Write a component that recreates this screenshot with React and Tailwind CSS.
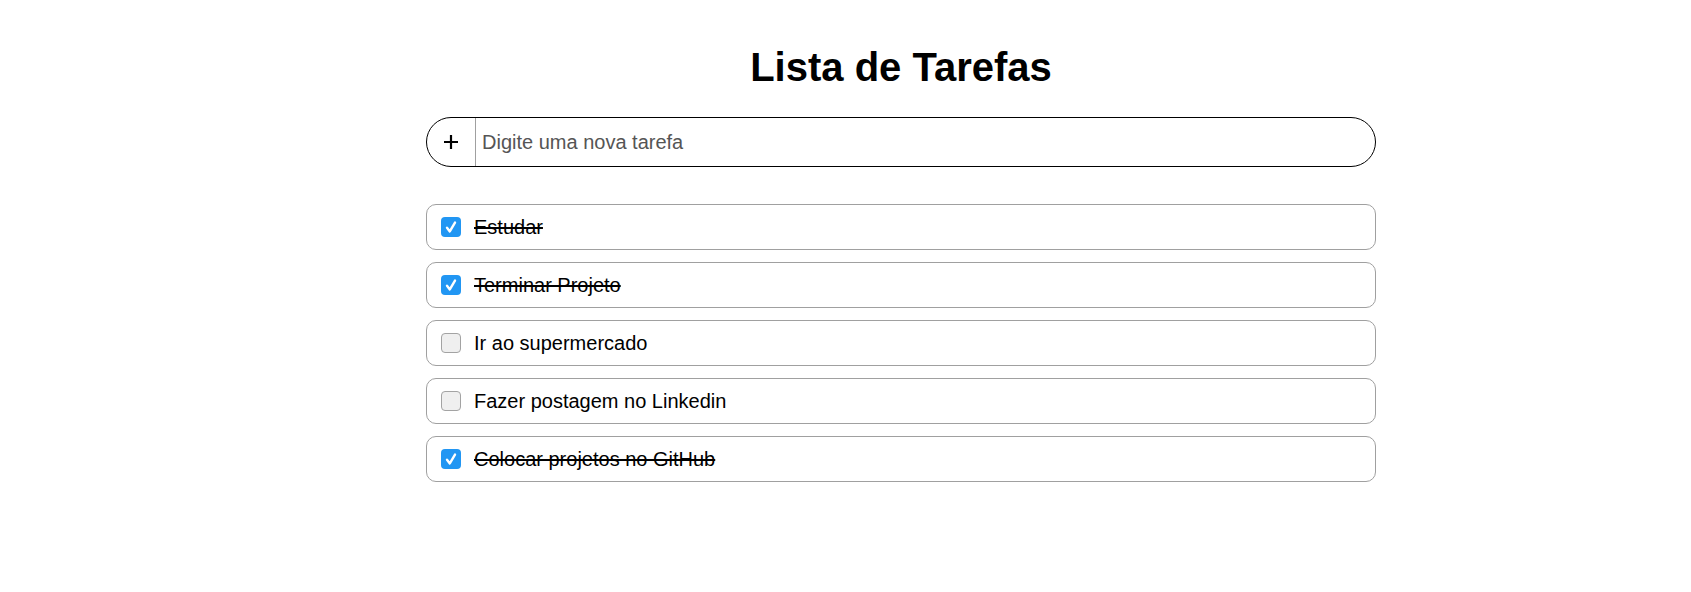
import { useState } from "react";

const initialTasks = [
  { id: 1, text: "Estudar", done: true },
  { id: 2, text: "Terminar Projeto", done: true },
  { id: 3, text: "Ir ao supermercado", done: false },
  { id: 4, text: "Fazer postagem no Linkedin", done: false },
  { id: 5, text: "Colocar projetos no GitHub", done: true },
];

function Checkbox({ checked, onChange }) {
  return (
    <button
      type="button"
      onClick={onChange}
      className={
        checked
          ? "w-5 h-5 shrink-0 rounded-[4px] bg-[#2196f3] flex items-center justify-center"
          : "w-5 h-5 shrink-0 rounded-[4px] bg-[#efefef] border border-[#a3a3a3]"
      }
    >
      {checked && (
        <svg width="16" height="16" viewBox="0 0 16 16" fill="none">
          <path
            d="M4 8.8 L6.8 12.4 L12 3.6"
            stroke="white"
            strokeWidth="2.4"
            strokeLinecap="round"
            strokeLinejoin="round"
          />
        </svg>
      )}
    </button>
  );
}

export default function App() {
  const [tasks, setTasks] = useState(initialTasks);
  const [newTask, setNewTask] = useState("");

  const addTask = () => {
    if (!newTask.trim()) return;
    setTasks([...tasks, { id: Date.now(), text: newTask, done: false }]);
    setNewTask("");
  };

  const toggle = (id) =>
    setTasks(tasks.map((t) => (t.id === id ? { ...t, done: !t.done } : t)));

  return (
    <div className="min-h-screen bg-white font-['Liberation_Sans',Arial,sans-serif] text-black">
      <div className="w-[950px] ml-[426px] pt-[44px] flex flex-col">
        <h1 className="text-[40px] leading-[46px] font-bold text-center">
          Lista de Tarefas
        </h1>

        <div className="mt-[27px] h-[50px] flex items-stretch border border-black rounded-full overflow-hidden">
          <button
            type="button"
            onClick={addTask}
            className="w-[49px] shrink-0 flex items-center justify-center border-r border-[#a0a0a0]"
          >
            <svg width="16" height="16" viewBox="0 0 16 16">
              <path d="M8 1 V15 M1 8 H15" stroke="black" strokeWidth="2.2" />
            </svg>
          </button>
          <input
            type="text"
            value={newTask}
            onChange={(e) => setNewTask(e.target.value)}
            onKeyDown={(e) => e.key === "Enter" && addTask()}
            placeholder="Digite uma nova tarefa"
            className="flex-1 pl-[6px] text-[20px] outline-none placeholder:text-[#555]"
          />
        </div>

        <ul className="mt-[37px] flex flex-col gap-[12px]">
          {tasks.map((task) => (
            <li
              key={task.id}
              className="h-[46px] flex items-center gap-[13px] pl-[14px] border border-[#a0a0a0] rounded-[10px]"
            >
              <Checkbox checked={task.done} onChange={() => toggle(task.id)} />
              <span
                className={
                  task.done ? "text-[20px] line-through" : "text-[20px]"
                }
              >
                {task.text}
              </span>
            </li>
          ))}
        </ul>
      </div>
    </div>
  );
}
